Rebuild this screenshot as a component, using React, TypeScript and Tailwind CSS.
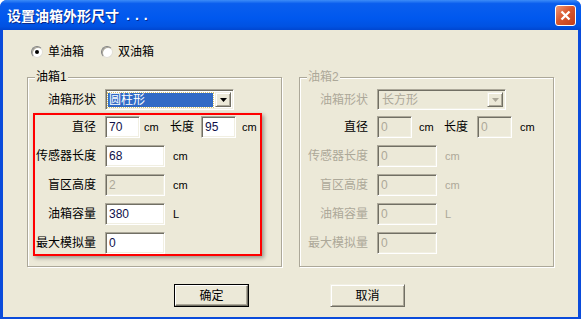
import React from 'react'

const sunken =
  'border border-t-[#ACA899] border-l-[#ACA899] border-b-white border-r-white shadow-[inset_1px_1px_0_#716F64,inset_-1px_-1px_0_#F1EFE2]'
const raised =
  'border border-t-[#F1EFE2] border-l-[#F1EFE2] border-b-[#716F64] border-r-[#716F64] shadow-[inset_1px_1px_0_#fff,inset_-1px_-1px_0_#ACA899]'

function Box({ value, w, off }: { value: string; w: string; off?: boolean }) {
  return (
    <div
      className={`${sunken} ${w} h-[22px] pl-[3px] pt-[3px] text-[12px] leading-[14px] ${
        off ? 'bg-[#ECE9D8] text-[#ACA899]' : 'bg-white text-[#10104A]'
      }`}
    >
      {value}
    </div>
  )
}

function Combo({ text, on }: { text: string; on: boolean }) {
  return (
    <div className={`${sunken} ml-[9px] w-[129px] h-[21px] flex p-[2px] ${on ? 'bg-white' : 'bg-[#ECE9D8]'}`}>
      <div className="flex-1 flex items-center pr-[2px]">
        {on ? (
          <div className="w-full h-[14px] bg-[#316AC5] outline-1 outline-dotted outline-[#D8C46A] text-white pl-[1px] leading-[14px]">
            {text}
          </div>
        ) : (
          <div className="pl-[2px] text-[#ACA899] leading-[14px]">{text}</div>
        )}
      </div>
      <div className={`${raised} w-[16px] h-full bg-[#ECE9D8] flex items-center justify-center`}>
        <svg width="7" height="4" viewBox="0 0 7 4">
          <path d="M0 0H7L3.5 4Z" fill={on ? '#000' : '#ACA899'} />
        </svg>
      </div>
    </div>
  )
}

type Gaps = { a: string; cm: string; b: string; c: string }

function Group({
  title,
  shape,
  on,
  vals,
  gaps,
}: {
  title: string
  shape: string
  on: boolean
  vals: string[]
  gaps: Gaps
}) {
  const lbl = on ? 'text-black' : 'text-[#ACA899]'
  const rows = [
    { label: '传感器长度', unit: 'cm', v: vals[2], off: !on },
    { label: '盲区高度', unit: 'cm', v: vals[3], off: true },
    { label: '油箱容量', unit: 'L', v: vals[4], off: !on },
    { label: '最大模拟量', unit: '', v: vals[5], off: !on },
  ]
  return (
    <div className="relative w-[255px] h-[190px] border border-[#ACA899] shadow-[inset_1px_1px_0_#fff,1px_1px_0_#fff]">
      <span className={`absolute left-[7px] top-[-8px] bg-[#ECE9D8] px-px leading-[14px] ${lbl}`}>{title}</span>
      <div className="flex flex-col pt-[11px]">
        <div className="flex items-center h-[21px]">
          <span className={`w-[68px] text-right leading-[14px] ${lbl}`}>油箱形状</span>
          <Combo text={shape} on={on} />
        </div>
        <div className="flex flex-col gap-[7px] mt-[6px]">
          <div className="flex items-center h-[22px]">
            <span className="w-[68px] text-right leading-[14px]">直径</span>
            <div className="ml-[9px]">
              <Box value={vals[0]} w="w-[35px]" off={!on} />
            </div>
            <span className={`${gaps.a} ${gaps.cm} text-[11px]`}>cm</span>
            <span className="w-[24px] leading-[14px]">长度</span>
            <div className={gaps.b}>
              <Box value={vals[1]} w="w-[35px]" off={!on} />
            </div>
            <span className={`${gaps.c} text-[11px]`}>cm</span>
          </div>
          {rows.map((r) => (
            <div key={r.label} className="flex items-center h-[22px]">
              <span className={`w-[68px] text-right leading-[14px] ${lbl}`}>{r.label}</span>
              <div className="ml-[9px]">
                <Box value={r.v} w="w-[60px]" off={r.off} />
              </div>
              <span className={`ml-[8px] text-[11px] ${lbl}`}>{r.unit}</span>
            </div>
          ))}
        </div>
      </div>
    </div>
  )
}

function Radio({ checked, label }: { checked?: boolean; label: string }) {
  return (
    <div className="flex items-center">
      <div className="w-[12px] h-[12px] rounded-full bg-white border border-t-[#808080] border-l-[#808080] border-b-[#E0DED4] border-r-[#E0DED4] shadow-[inset_1px_1px_0_#ACA899] flex items-center justify-center">
        {checked && <div className="w-[4px] h-[4px] rounded-full bg-black" />}
      </div>
      <span className="ml-[5px] leading-[14px]">{label}</span>
    </div>
  )
}

export default function App() {
  return (
    <div className="relative w-[581px] h-[319px] flex flex-col bg-[#0A4BDB] rounded-t-[7px] overflow-hidden font-['Liberation_Sans','Noto_Sans_CJK_SC',sans-serif] text-[12px] text-black">
      <div className="h-[30px] flex items-center justify-between pl-[7px] pr-[5px] bg-[linear-gradient(#3C8CF8_0%,#0A5EEE_12%,#0058EE_60%,#0052E2_88%,#0046D0_100%)]">
        <div className="flex items-center text-white font-bold text-[14px] [text-shadow:1px_1px_0_#0A2A8A]">
          <span className="font-['Noto_Sans_CJK_SC',sans-serif]">设置油箱外形尺寸</span>
          <span className="ml-[7px] tracking-[5px]">...</span>
        </div>
        <div className="mt-[1px] w-[21px] h-[21px] rounded-[3px] border border-white bg-[linear-gradient(135deg,#EE9978_0%,#D9582F_45%,#C23E1A_100%)] flex items-center justify-center">
          <svg width="11" height="11" viewBox="0 0 11 11">
            <path d="M1.5 1.5L9.5 9.5M9.5 1.5L1.5 9.5" stroke="#fff" strokeWidth="2.3" />
          </svg>
        </div>
      </div>

      <div className="flex-1 mx-[3px] mb-[2px] bg-[#ECE9D8] flex flex-col">
        <div className="mt-[15px] h-[14px] pl-[28px] flex items-center gap-[17px]">
          <Radio checked label="单油箱" />
          <Radio label="双油箱" />
        </div>

        <div className="mt-[18px] pl-[24px] flex gap-[17px]">
          <Group
            title="油箱1"
            shape="圆柱形"
            on
            vals={['70', '95', '68', '2', '380', '0']}
            gaps={{ a: 'ml-[4px]', cm: 'w-[26px]', b: 'ml-[7px]', c: 'ml-[6px]' }}
          />
          <Group
            title="油箱2"
            shape="长方形"
            on={false}
            vals={['0', '0', '0', '0', '0', '0']}
            gaps={{ a: 'ml-[7px]', cm: 'w-[25px]', b: 'ml-[9px]', c: 'ml-[8px]' }}
          />
        </div>

        <div className="mt-[17px] pl-[171px] flex gap-[81px]">
          <button className="w-[75px] h-[23px] border border-black bg-[#ECE9D8]">
            <div className="w-full h-full border border-t-white border-l-white border-b-[#716F64] border-r-[#716F64] shadow-[inset_-1px_-1px_0_#ACA899] flex items-center justify-center">
              确定
            </div>
          </button>
          <button className={`${raised} w-[75px] h-[23px] bg-[#ECE9D8] flex items-center justify-center`}>取消</button>
        </div>
      </div>

      <div className="absolute left-[33px] top-[113px] w-[229px] h-[143px] border-2 border-[#FF0000] shadow-[2px_2px_4px_rgba(0,0,0,0.35)] pointer-events-none" />
    </div>
  )
}
